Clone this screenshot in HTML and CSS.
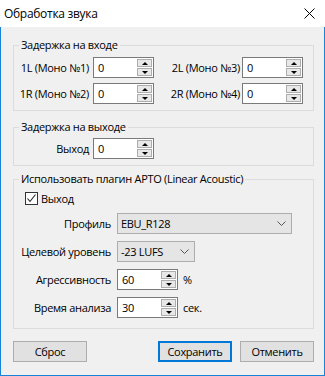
FILE: index.html
```html
<!DOCTYPE html>
<html lang="ru">
<head>
  <meta charset="UTF-8" />
  <title>Обработка звука</title>
  <link rel="stylesheet" href="styles.css">
</head>
<body>
  <div class="window">
    <div class="titlebar">
      <span class="title">Обработка звука</span>
      <svg class="close" width="11" height="11" viewBox="0 0 11 11">
        <path d="M0.5 0.5L10.5 10.5M10.5 0.5L0.5 10.5" stroke="#000" stroke-width="1" fill="none"/>
      </svg>
    </div>

    <div class="client">
      <fieldset class="group group-in">
        <legend>Задержка на входе</legend>
        <div class="delay-grid">
          <label>1L (Моно №1)</label>
          <div class="spin"><input type="text" value="0"><div class="arrows"><span class="up"></span><span class="down"></span></div></div>
          <label class="right">2L (Моно №3)</label>
          <div class="spin"><input type="text" value="0"><div class="arrows"><span class="up"></span><span class="down"></span></div></div>
          <label>1R (Моно №2)</label>
          <div class="spin"><input type="text" value="0"><div class="arrows"><span class="up"></span><span class="down"></span></div></div>
          <label class="right">2R (Моно №4)</label>
          <div class="spin"><input type="text" value="0"><div class="arrows"><span class="up"></span><span class="down"></span></div></div>
        </div>
      </fieldset>

      <fieldset class="group group-out">
        <legend>Задержка на выходе</legend>
        <div class="delay-grid">
          <label>Выход</label>
          <div class="spin"><input type="text" value="0"><div class="arrows"><span class="up"></span><span class="down"></span></div></div>
        </div>
      </fieldset>

      <fieldset class="group group-apto">
        <legend>Использовать плагин APTO (Linear Acoustic)</legend>
        <div class="check-row">
          <span class="checkbox">
            <svg width="11" height="11" viewBox="0 0 11 11"><path d="M1.5 5.5L4 8.5L9.5 1.5" stroke="#222" stroke-width="1.1" fill="none"/></svg>
          </span>
          <span>Выход</span>
        </div>
        <div class="form-grid">
          <label>Профиль</label>
          <div class="combo combo-wide">
            <span>EBU_R128</span>
            <svg width="9" height="5" viewBox="0 0 9 5"><path d="M0.5 0.5L4.5 4.5L8.5 0.5" stroke="#555" fill="none"/></svg>
          </div>

          <label>Целевой уровень</label>
          <div class="combo combo-short">
            <span>-23 LUFS</span>
            <svg width="9" height="5" viewBox="0 0 9 5"><path d="M0.5 0.5L4.5 4.5L8.5 0.5" stroke="#555" fill="none"/></svg>
          </div>

          <label>Агрессивность</label>
          <div class="with-unit">
            <div class="spin"><input type="text" value="60"><div class="arrows"><span class="up"></span><span class="down"></span></div></div>
            <span class="unit">%</span>
          </div>

          <label>Время анализа</label>
          <div class="with-unit">
            <div class="spin"><input type="text" value="30"><div class="arrows"><span class="up"></span><span class="down"></span></div></div>
            <span class="unit">сек.</span>
          </div>
        </div>
      </fieldset>

      <div class="buttons">
        <button class="btn">Сброс</button>
        <button class="btn default">Сохранить</button>
        <button class="btn">Отменить</button>
      </div>
    </div>
  </div>
</body>
</html>
```

FILE: styles.css
```css
:root {
  --face: #f0f0f0;
  --accent: #1883d7;
  --line: #dcdcdc;
  --btn: #e1e1e1;
  --btn-border: #adadad;
}

body {
  margin: 0;
  font-family: 'Open Sans', 'Noto Sans', sans-serif;
  font-size: 11px;
  letter-spacing: -0.3px;
  color: #000;
}

.window {
  width: 325px;
  height: 376px;
  display: flex;
  flex-direction: column;
  background: var(--face);
}

.titlebar {
  height: 27px;
  flex: none;
  background: #fff;
  display: flex;
  align-items: center;
  justify-content: space-between;
  padding: 0 10px 0 4px;
}

.title {
  font-size: 12px;
}

.client {
  flex: 1;
  border: 1px solid var(--accent);
  border-top: none;
  padding: 10px 10px 0 12px;
}

.group {
  width: 301px;
  box-sizing: border-box;
  margin: 0;
  padding: 0;
  min-width: 0;
  border: 1px solid var(--line);
}

.group legend {
  line-height: 16px;
  padding: 0 2px;
  margin-left: 5px;
}

.group-in {
  padding: 4px 0 6px;
}

.group-out {
  margin-top: 8px;
  padding: 3px 0 6px;
}

.group-apto {
  margin-top: 5px;
  padding: 5px 0 10px;
}

.delay-grid {
  display: grid;
  grid-template-columns: 79px 61px 88px 61px;
  grid-auto-rows: 21px;
  row-gap: 5px;
  align-items: center;
}

.delay-grid label {
  text-align: right;
  padding-right: 4px;
  white-space: nowrap;
}

.delay-grid label.right {
  padding-right: 2px;
}

/* numeric up/down */
.spin {
  display: flex;
  width: 61px;
  height: 21px;
  box-sizing: border-box;
  border: 1px solid #7a7a7a;
  background: #fff;
  padding: 1px;
}

.spin input {
  flex: 1;
  min-width: 0;
  border: none;
  outline: none;
  padding: 0 0 0 3px;
  font: inherit;
  letter-spacing: inherit;
  background: transparent;
}

.arrows {
  width: 15px;
  display: flex;
  flex-direction: column;
  gap: 1px;
}

.arrows span {
  flex: 1;
  border: 1px solid var(--btn-border);
  background: #e8e8e8;
  display: flex;
  align-items: center;
  justify-content: center;
}

.arrows .up::after,
.arrows .down::after {
  content: "";
  border-left: 3px solid transparent;
  border-right: 3px solid transparent;
}

.arrows .up::after {
  border-bottom: 3px solid #000;
}

.arrows .down::after {
  border-top: 3px solid #000;
}

.check-row {
  display: flex;
  align-items: center;
  gap: 3px;
  margin-left: 11px;
  height: 13px;
}

.checkbox {
  width: 13px;
  height: 13px;
  box-sizing: border-box;
  border: 1px solid #333;
  background: #fff;
  display: flex;
  align-items: center;
  justify-content: center;
}

.form-grid {
  display: grid;
  grid-template-columns: 103px auto;
  grid-template-rows: 21px 21px 21px 21px;
  margin-top: 8px;
  row-gap: 7px;
  align-items: center;
}

.form-grid label {
  text-align: right;
  padding-right: 6px;
  white-space: nowrap;
}

.combo {
  height: 21px;
  box-sizing: border-box;
  border: 1px solid var(--btn-border);
  background: #e5e5e5;
  display: flex;
  align-items: center;
  justify-content: space-between;
  padding: 0 5px 0 3px;
}

.combo-wide {
  width: 175px;
}

.combo-short {
  width: 78px;
}

.with-unit {
  display: flex;
  align-items: center;
  gap: 5px;
}

.buttons {
  display: flex;
  gap: 8px;
  width: 301px;
  margin-top: 12px;
}

.btn {
  width: 74px;
  height: 21px;
  border: 1px solid var(--btn-border);
  background: var(--btn);
  font: inherit;
  letter-spacing: inherit;
  padding: 0;
}

.btn.default {
  margin-left: auto;
  border: 2px solid #0078d7;
}
```
